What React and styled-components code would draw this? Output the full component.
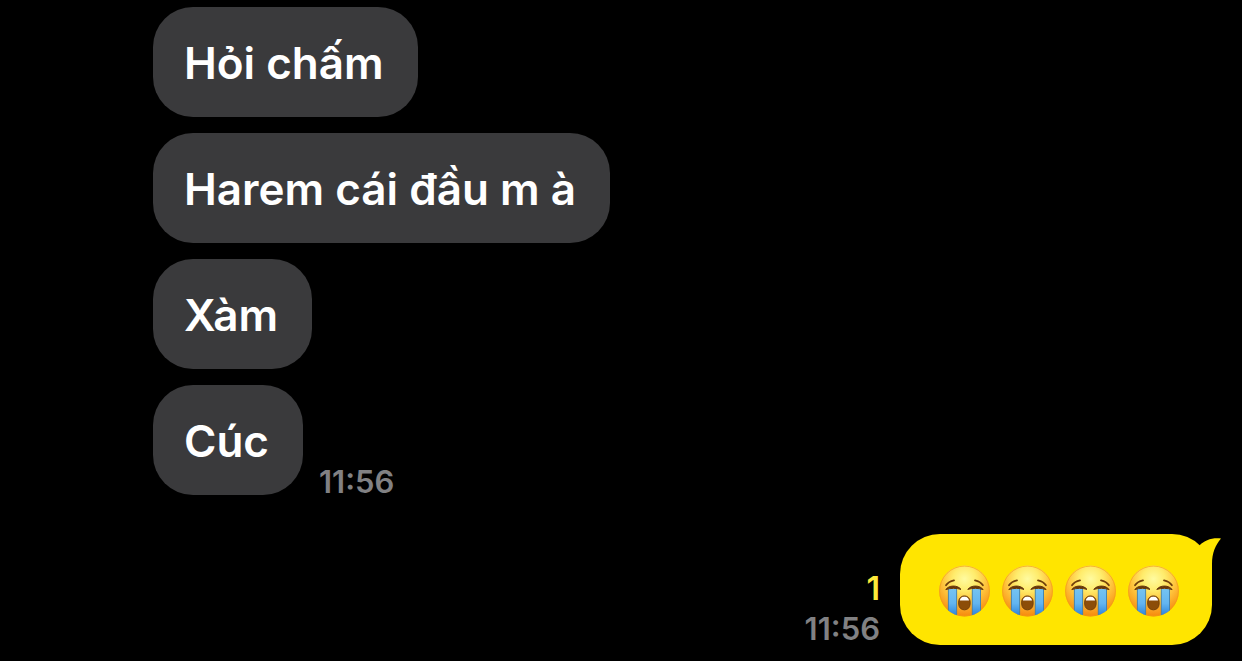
import React from "react";
import styled, { createGlobalStyle, css } from "styled-components";

const GlobalStyle = createGlobalStyle`
  *, *::before, *::after { box-sizing: border-box; }
  body {
    margin: 0;
    background: #000;
    font-family: Inter, "Liberation Sans", sans-serif;
  }
`;

const Chat = styled.main`
  display: flex;
  flex-direction: column;
  gap: 39px;
  padding: 7px 30px 16px 153px;
`;

const Group = styled.section`
  display: flex;
  flex-direction: column;
  gap: 16px;
`;

const Row = styled.div`
  display: flex;
  align-items: flex-end;
  justify-content: ${(p) => (p.$mine ? "flex-end" : "flex-start")};
  gap: ${(p) => (p.$mine ? "20px" : "16px")};
`;

const Bubble = styled.p`
  position: relative;
  display: flex;
  align-items: center;
  margin: 0;
  min-height: 110px;
  padding: 2px 34px 0 31px;
  border-radius: 40px;
  background: #3a3a3c;
  color: #fff;
  font-size: 44px;
  font-weight: 600;
  line-height: 56px;
  ${(p) =>
    p.$mine &&
    css`
      gap: 11px;
      min-height: 111px;
      padding: 2px 32px 0 39px;
      background: #ffe500;
    `}
`;

const Tail = styled.svg`
  position: absolute;
  top: 3px;
  right: -10px;
  width: 32px;
  height: 38px;
  fill: #ffe500;
`;

const Face = styled.svg`
  flex: none;
  width: 52px;
  height: 52px;
`;

const Meta = styled.div`
  display: flex;
  flex-direction: column;
  align-items: flex-end;
  padding-bottom: ${(p) => (p.$mine ? "3px" : "0")};
  line-height: 40px;
`;

const Unread = styled.span`
  color: #fee93a;
  font-size: 32px;
  font-weight: 600;
`;

const Time = styled.time`
  color: #818183;
  font-size: 31px;
  font-weight: 600;
  margin-bottom: -7px;
`;

function CryingFace() {
  return (
    <Face viewBox="0 0 52 52" role="img" aria-label="😭">
      <circle cx="25.5" cy="26" r="25.4" fill="url(#skin)" />
      <circle cx="25.5" cy="26" r="24.9" fill="none" stroke="#f39b16" strokeOpacity=".65" />
      <g clipPath="url(#head)">
        <path d="M9.5 24h8v27h-8zM33.4 24h8v27h-8z" fill="url(#tear)" />
        <path d="M9.4 24v27M17.6 24v27M33.3 24v27M41.5 24v27" stroke="#397fb4" strokeWidth=".9" fill="none" />
      </g>
      <path
        d="M6.8 24.6C9.5 20.2 18.5 19.6 22 24.4C17.5 22.9 11.5 23 6.8 24.6ZM28.8 24.4C32.3 19.6 41.3 20.2 44.1 24.6C39.5 23 33.5 22.9 28.8 24.4Z"
        fill="#67380b"
        stroke="#67380b"
        strokeWidth="1"
        strokeLinejoin="round"
      />
      <path d="M7 20.3Q9.5 16.3 15 15.3M36 15.3Q41.4 16.3 43.9 20.3" fill="none" stroke="#71400c" strokeWidth="1.8" strokeLinecap="round" />
      <path d="M19.7 37C19.7 28.9 31.1 28.9 31.1 37V39C31.1 46.8 19.7 46.8 19.7 39Z" fill="#8c4d08" />
      <path d="M20.8 35.6C21.2 30.2 29.6 30.2 30 35.6Z" fill="#fff" />
      <path d="M19.7 37C19.7 28.9 31.1 28.9 31.1 37V39C31.1 46.8 19.7 46.8 19.7 39Z" fill="none" stroke="#73410b" />
    </Face>
  );
}

const Defs = styled.svg`
  position: absolute;
  width: 0;
  height: 0;
`;

function FacePaints() {
  return (
    <Defs aria-hidden="true">
      <defs>
        <radialGradient id="skin" gradientUnits="userSpaceOnUse" cx="25.5" cy="14" r="38">
          <stop offset="0" stopColor="#fffba0" />
          <stop offset=".3" stopColor="#ffec6c" />
          <stop offset=".58" stopColor="#ffc43c" />
          <stop offset="1" stopColor="#f6860a" />
        </radialGradient>
        <linearGradient id="tear" gradientUnits="userSpaceOnUse" x1="0" y1="24" x2="0" y2="50">
          <stop offset="0" stopColor="#74c3f2" />
          <stop offset=".55" stopColor="#63b5f0" />
          <stop offset="1" stopColor="#2e86dc" />
        </linearGradient>
        <clipPath id="head">
          <circle cx="25.5" cy="26" r="25.4" />
        </clipPath>
      </defs>
    </Defs>
  );
}

const received = [
  { text: "Hỏi chấm" },
  { text: "Harem cái đầu m à" },
  { text: "Xàm" },
  { text: "Cúc", time: "11:56" },
];

export default function App() {
  return (
    <>
      <GlobalStyle />
      <FacePaints />
      <Chat>
        <Group>
          {received.map((m) => (
            <Row key={m.text}>
              <Bubble>{m.text}</Bubble>
              {m.time && (
                <Meta>
                  <Time>{m.time}</Time>
                </Meta>
              )}
            </Row>
          ))}
        </Group>
        <Group>
          <Row $mine>
            <Meta $mine>
              <Unread>1</Unread>
              <Time>11:56</Time>
            </Meta>
            <Bubble $mine>
              <Tail viewBox="0 0 32 38" aria-hidden="true">
                <path d="M0 20L9.5 8.5C14.5 3.2 22 .5 31 1.5C25.5 8 22 16 22 27V38H0Z" />
              </Tail>
              {[0, 1, 2, 3].map((i) => (
                <CryingFace key={i} />
              ))}
            </Bubble>
          </Row>
        </Group>
      </Chat>
    </>
  );
}
